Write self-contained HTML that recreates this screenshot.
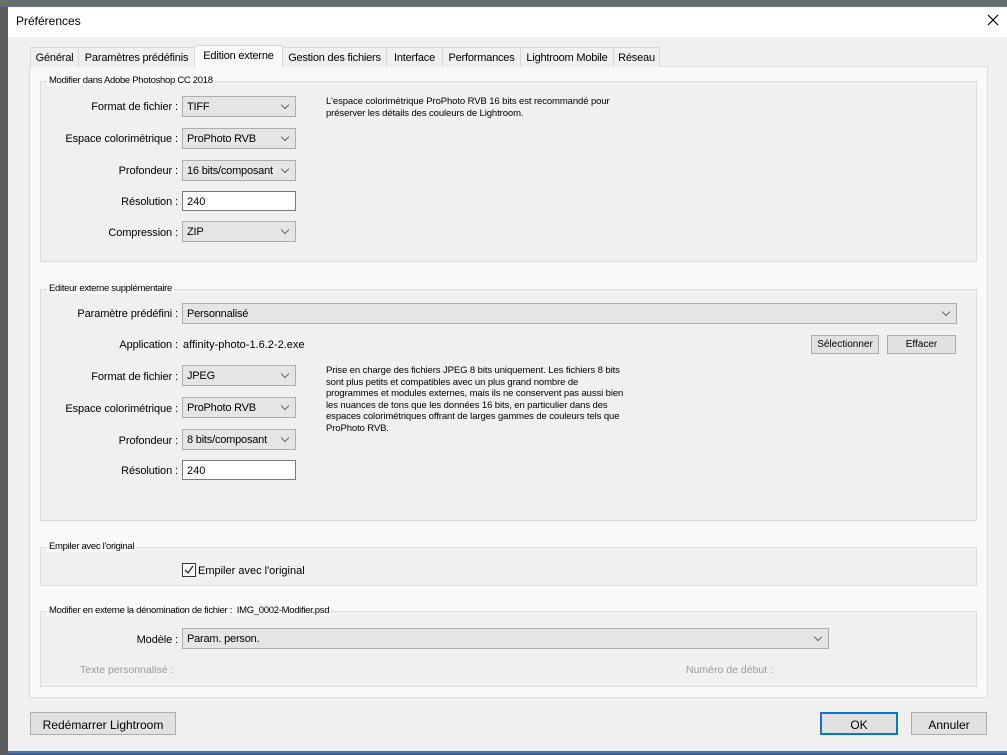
<!DOCTYPE html>
<html><head><meta charset="utf-8"><style>
*{box-sizing:border-box;margin:0;padding:0}
body{width:1007px;height:755px;position:relative;overflow:hidden;background:#5a5d60;font-family:"Liberation Sans",sans-serif;font-size:11px;color:#000}
.a{position:absolute}
.dlg{left:8px;top:6px;width:999px;height:747px;background:#f0f0f0;border-top:1px solid #5a7a98;border-bottom:2px solid #3a7cc0}
.title{left:8px;top:7px;width:999px;height:30px;background:#fff}
.tab{top:47px;height:20px;border:1px solid #d9d9d9;border-bottom:none;background:#f0f0f0;padding:4px 0 0;text-align:center;font-size:11px;letter-spacing:-0.2px}
.tab.cur{top:45px;height:22px;background:#f9f9f9;z-index:2;padding-top:4px}
.panel{left:29px;top:66px;width:959px;height:632px;background:#f9f9f9;border:1px solid #dcdcdc}
.grp{border:1px solid #dcdcdc;background:#f0f0f0}
.leg{font-size:9.5px;background:#f9f9f9;padding:0 2px;letter-spacing:-0.3px}
.lbl{text-align:right;width:170px;left:8px;letter-spacing:-0.1px}
.sel{height:21px;background:#e5e5e5;border:1px solid #adadad;padding:4px 4px;font-size:11px;letter-spacing:-0.2px}
.sel:after{content:"";position:absolute;right:7px;top:5px;width:5px;height:5px;border-right:1px solid #666;border-bottom:1px solid #666;transform:rotate(45deg)}
.inp{height:20px;background:#fff;border:1px solid #7a7a7a;padding:4px 4px}
.btn{background:#e1e1e1;border:1px solid #adadad;text-align:center;font-size:11px}
.desc{font-size:9.5px;line-height:11.5px;left:326px;width:300px;letter-spacing:-0.1px}
</style></head><body>
<div class="a" style="left:0;top:0;width:1007px;height:7px;background:#6a6d70"></div>
<div class="a dlg"></div>
<div class="a title"></div>
<div class="a" style="left:16px;top:14px;font-size:12px">Préférences</div>
<svg class="a" style="left:986px;top:13px" width="14" height="14"><path d="M2 2L12 12M12 2L2 12" stroke="#000" stroke-width="1.2"/></svg>

<div class="a panel"></div>
<div class="a tab" style="left:30px;width:49px">Général</div>
<div class="a tab" style="left:78px;width:117px">Paramètres prédéfinis</div>
<div class="a tab cur" style="left:194px;width:89px">Edition externe</div>
<div class="a tab" style="left:282px;width:105px">Gestion des fichiers</div>
<div class="a tab" style="left:386px;width:57px">Interface</div>
<div class="a tab" style="left:442px;width:79px">Performances</div>
<div class="a tab" style="left:520px;width:94px">Lightroom Mobile</div>
<div class="a tab" style="left:613px;width:47px">Réseau</div>

<div class="a grp" style="left:40px;top:81px;width:937px;height:181px"></div>
<div class="a leg" style="left:47px;top:75px">Modifier dans Adobe Photoshop CC 2018</div>
<div class="a lbl" style="top:101px">Format de fichier :</div>
<div class="a sel" style="left:182px;top:96px;width:114px">TIFF</div>
<div class="a lbl" style="top:133px">Espace colorimétrique :</div>
<div class="a sel" style="left:182px;top:128px;width:114px">ProPhoto RVB</div>
<div class="a lbl" style="top:165px">Profondeur :</div>
<div class="a sel" style="left:182px;top:160px;width:114px">16 bits/composant</div>
<div class="a lbl" style="top:196px">Résolution :</div>
<div class="a inp" style="left:182px;top:191px;width:114px">240</div>
<div class="a lbl" style="top:227px">Compression :</div>
<div class="a sel" style="left:182px;top:221px;width:114px">ZIP</div>
<div class="a desc" style="top:96px">L'espace colorimétrique ProPhoto RVB 16 bits est recommandé pour préserver les détails des couleurs de Lightroom.</div>

<div class="a grp" style="left:40px;top:289px;width:937px;height:232px"></div>
<div class="a leg" style="left:47px;top:283px">Editeur externe supplémentaire</div>
<div class="a lbl" style="top:308px">Paramètre prédéfini :</div>
<div class="a sel" style="left:182px;top:303px;width:775px">Personnalisé</div>
<div class="a lbl" style="top:339px">Application :</div>
<div class="a" style="left:183px;top:339px">affinity-photo-1.6.2-2.exe</div>
<div class="a btn" style="left:811px;top:335px;width:68px;height:19px;padding-top:3px;font-size:10px">Sélectionner</div>
<div class="a btn" style="left:887px;top:335px;width:69px;height:19px;padding-top:3px;font-size:10px">Effacer</div>
<div class="a lbl" style="top:371px">Format de fichier :</div>
<div class="a sel" style="left:182px;top:365px;width:114px">JPEG</div>
<div class="a lbl" style="top:403px">Espace colorimétrique :</div>
<div class="a sel" style="left:182px;top:397px;width:114px">ProPhoto RVB</div>
<div class="a lbl" style="top:435px">Profondeur :</div>
<div class="a sel" style="left:182px;top:429px;width:114px">8 bits/composant</div>
<div class="a lbl" style="top:465px">Résolution :</div>
<div class="a inp" style="left:182px;top:460px;width:114px">240</div>
<div class="a desc" style="top:365px">Prise en charge des fichiers JPEG 8 bits uniquement. Les fichiers 8 bits<br>sont plus petits et compatibles avec un plus grand nombre de<br>programmes et modules externes, mais ils ne conservent pas aussi bien<br>les nuances de tons que les données 16 bits, en particulier dans des<br>espaces colorimétriques offrant de larges gammes de couleurs tels que<br>ProPhoto RVB.</div>

<div class="a grp" style="left:40px;top:547px;width:937px;height:39px"></div>
<div class="a leg" style="left:47px;top:541px">Empiler avec l'original</div>
<div class="a" style="left:182px;top:563px;width:14px;height:14px;border:1px solid #333;background:#fff"></div>
<svg class="a" style="left:182px;top:563px" width="14" height="14"><path d="M3 7L6 10L11 3" stroke="#222" stroke-width="1.3" fill="none"/></svg>
<div class="a" style="left:198px;top:565px">Empiler avec l'original</div>

<div class="a grp" style="left:40px;top:611px;width:937px;height:76px"></div>
<div class="a leg" style="left:47px;top:605px">Modifier en externe la dénomination de fichier :&nbsp; IMG_0002-Modifier.psd</div>
<div class="a lbl" style="top:634px">Modèle :</div>
<div class="a sel" style="left:182px;top:628px;width:647px">Param. person.</div>
<div class="a" style="left:80px;top:664px;color:#9a9a9a;font-size:10.5px">Texte personnalisé :</div>
<div class="a" style="left:686px;top:664px;color:#9a9a9a;font-size:10.5px">Numéro de début :</div>

<div class="a btn" style="left:30px;top:712px;width:146px;height:23px;padding-top:5px;font-size:12px">Redémarrer Lightroom</div>
<div class="a btn" style="left:820px;top:712px;width:78px;height:23px;padding-top:4px;font-size:12px;border:2px solid #0078d7">OK</div>
<div class="a btn" style="left:911px;top:712px;width:76px;height:23px;padding-top:5px;font-size:12px">Annuler</div>
</body></html>
